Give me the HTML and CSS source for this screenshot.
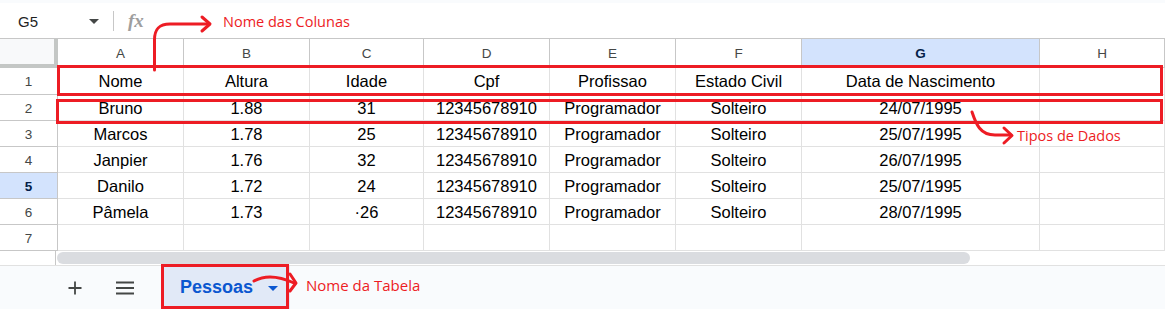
FILE: index.html
```html
<!DOCTYPE html>
<html lang="pt-BR">
<head>
<meta charset="UTF-8">
<title>Planilha - Pessoas</title>
<link rel="stylesheet" href="styles.css">
</head>
<body>
<div class="app">
  <div class="topline"></div>

  <div class="formula-bar">
    <div class="name-box">G5</div>
    <span class="caret"></span>
    <span class="sep"></span>
    <span class="fx">fx</span>
  </div>

  <div class="sheet">
    <div class="corner"></div>
    <div class="col-head">A</div>
    <div class="col-head">B</div>
    <div class="col-head">C</div>
    <div class="col-head">D</div>
    <div class="col-head">E</div>
    <div class="col-head">F</div>
    <div class="col-head sel">G</div>
    <div class="col-head">H</div>

    <div class="row-head">1</div>
    <div class="cell">Nome</div>
    <div class="cell">Altura</div>
    <div class="cell">Idade</div>
    <div class="cell">Cpf</div>
    <div class="cell">Profissao</div>
    <div class="cell">Estado Civil</div>
    <div class="cell">Data de Nascimento</div>
    <div class="cell"></div>

    <div class="row-head">2</div>
    <div class="cell">Bruno</div>
    <div class="cell">1.88</div>
    <div class="cell">31</div>
    <div class="cell">12345678910</div>
    <div class="cell">Programador</div>
    <div class="cell">Solteiro</div>
    <div class="cell">24/07/1995</div>
    <div class="cell"></div>

    <div class="row-head">3</div>
    <div class="cell">Marcos</div>
    <div class="cell">1.78</div>
    <div class="cell">25</div>
    <div class="cell">12345678910</div>
    <div class="cell">Programador</div>
    <div class="cell">Solteiro</div>
    <div class="cell">25/07/1995</div>
    <div class="cell"></div>

    <div class="row-head">4</div>
    <div class="cell">Janpier</div>
    <div class="cell">1.76</div>
    <div class="cell">32</div>
    <div class="cell">12345678910</div>
    <div class="cell">Programador</div>
    <div class="cell">Solteiro</div>
    <div class="cell">26/07/1995</div>
    <div class="cell"></div>

    <div class="row-head sel">5</div>
    <div class="cell">Danilo</div>
    <div class="cell">1.72</div>
    <div class="cell">24</div>
    <div class="cell">12345678910</div>
    <div class="cell">Programador</div>
    <div class="cell">Solteiro</div>
    <div class="cell">25/07/1995</div>
    <div class="cell"></div>

    <div class="row-head">6</div>
    <div class="cell">Pâmela</div>
    <div class="cell">1.73</div>
    <div class="cell">·26</div>
    <div class="cell">12345678910</div>
    <div class="cell">Programador</div>
    <div class="cell">Solteiro</div>
    <div class="cell">28/07/1995</div>
    <div class="cell"></div>

    <div class="row-head">7</div>
    <div class="cell"></div>
    <div class="cell"></div>
    <div class="cell"></div>
    <div class="cell"></div>
    <div class="cell"></div>
    <div class="cell"></div>
    <div class="cell"></div>
    <div class="cell"></div>
  </div>

  <div class="scroll-row">
    <div class="scroll-left"></div>
    <div class="scroll-thumb"></div>
  </div>

  <div class="tab-bar">
    <span class="tool plus">
      <svg width="16" height="16" viewBox="0 0 16 16"><path d="M8 1.5V14.5M1.5 8H14.5" stroke="#444746" stroke-width="1.8" fill="none"/></svg>
    </span>
    <span class="tool menu">
      <svg width="18" height="14" viewBox="0 0 18 14"><path d="M0 1.5H18M0 7H18M0 12.5H18" stroke="#444746" stroke-width="1.8" fill="none"/></svg>
    </span>
    <div class="tab">
      <span class="tab-name">Pessoas</span>
      <span class="tab-caret"></span>
    </div>
  </div>

  <!-- anotações em vermelho -->
  <div class="mark mark-head"></div>
  <div class="mark mark-row"></div>
  <div class="mark mark-tab"></div>

  <svg class="arrows" width="1165" height="309" viewBox="0 0 1165 309">
    <g stroke="#ed1c24" stroke-width="3" fill="none" stroke-linecap="round" stroke-linejoin="round">
      <path d="M154.5 70V40C154.5 30 158 24 170 24H209"/>
      <path d="M202 17L210 24L202 31"/>
      <path d="M972 112C976 124 980 135 995 135H1011"/>
      <path d="M1004 128L1012 135.5L1004 143"/>
      <path d="M254 281Q270 272 294 283"/>
      <path d="M290 274L296 283L290 291"/>
    </g>
  </svg>

  <span class="note note-cols">Nome das Colunas</span>
  <span class="note note-types">Tipos de Dados</span>
  <span class="note note-tab">Nome da Tabela</span>
</div>
</body>
</html>
```

FILE: styles.css
```css
html, body {
margin: 0;
padding: 0;
}

body {
font-family: "Liberation Sans", Arial, sans-serif;
color: #000;
background: #fff;
overflow: hidden;
}

.app {
position: relative;
width: 1165px;
height: 309px;
overflow: hidden;
}

.topline {
height: 3px;
background: #f9fbfd;
}

/* barra de formula */
.formula-bar {
display: flex;
align-items: center;
height: 35px;
border-bottom: 1px solid #c7c7c7;
}

.name-box {
width: 89px;
padding: 1px 0 0 18px;
box-sizing: border-box;
font-size: 15px;
color: #1f1f1f;
}

.caret {
width: 0;
height: 0;
margin-top: 1px;
border-left: 5.5px solid transparent;
border-right: 5.5px solid transparent;
border-top: 5px solid #444746;
}

.sep {
width: 1px;
height: 20px;
margin-left: 14px;
background: #c7c7c7;
}

.fx {
margin-left: 14px;
font-family: "Liberation Serif", serif;
font-style: italic;
font-weight: bold;
font-size: 19px;
color: #9e9e9e;
}

/* grade */
.sheet {
display: grid;
grid-template-columns: 58px 126px 126px 114px 126px 126px 126px 238px 125px;
grid-template-rows: 29px 27px repeat(6, 26px);
}

.sheet > div {
box-sizing: border-box;
display: flex;
align-items: center;
justify-content: center;
white-space: nowrap;
overflow: hidden;
padding-top: 1px;
}

.corner {
background: #f8f9fa;
border-right: 4px solid #c4c7c5;
border-bottom: 4px solid #c4c7c5;
}

.col-head {
font-size: 13.5px;
color: #444746;
border-right: 1px solid #c7c7c7;
border-bottom: 1px solid #c7c7c7;
}

.row-head {
font-size: 13.5px;
color: #444746;
border-right: 1px solid #c7c7c7;
border-bottom: 1px solid #c7c7c7;
}

.col-head.sel, .row-head.sel {
background: #d3e3fd;
color: #041e49;
font-weight: bold;
}

.cell {
font-size: 16.5px;
border-right: 1px solid #e1e1e1;
border-bottom: 1px solid #e1e1e1;
}

/* barra de rolagem */
.scroll-row {
display: flex;
height: 15px;
border-bottom: 1px solid #e1e1e1;
box-sizing: border-box;
}

.scroll-left {
width: 56px;
border-right: 1px solid #c7c7c7;
box-sizing: border-box;
}

.scroll-thumb {
width: 913px;
height: 12px;
margin: 1px 0 0 1px;
border-radius: 6px;
background: #dadce0;
}

/* abas */
.tab-bar {
display: flex;
align-items: center;
height: 43px;
background: #f9fbfd;
}

.tool {
display: flex;
}

.plus {
margin-left: 67px;
}

.menu {
margin-left: 33px;
}

.tab {
display: flex;
align-items: center;
align-self: stretch;
margin-left: 28px;
width: 128px;
padding-left: 18px;
box-sizing: border-box;
background: #e1e9f7;
}

.tab-name {
font-size: 18px;
font-weight: bold;
color: #0b57d0;
}

.tab-caret {
margin: 2px 0 0 15px;
width: 0;
height: 0;
border-left: 5px solid transparent;
border-right: 5px solid transparent;
border-top: 5px solid #0b57d0;
}

/* anotacoes */
.mark {
position: absolute;
border: 3px solid #ed1c24;
box-sizing: border-box;
}

.mark-head {
left: 57px;
top: 65px;
width: 1106px;
height: 31px;
}

.mark-row {
left: 56px;
top: 99px;
width: 1107px;
height: 25px;
}

.mark-tab {
left: 161px;
top: 264px;
width: 128px;
height: 45px;
}

.arrows {
position: absolute;
left: 0;
top: 0;
pointer-events: none;
}

.note {
position: absolute;
font-family: "Open Sans", sans-serif;
font-size: 14.5px;
line-height: 15px;
color: #ed1c24;
white-space: nowrap;
}

.note-cols {
left: 223px;
top: 14px;
}

.note-types {
left: 1017px;
top: 128px;
}

.note-tab {
left: 306px;
top: 278px;
font-size: 15px;
}
```
